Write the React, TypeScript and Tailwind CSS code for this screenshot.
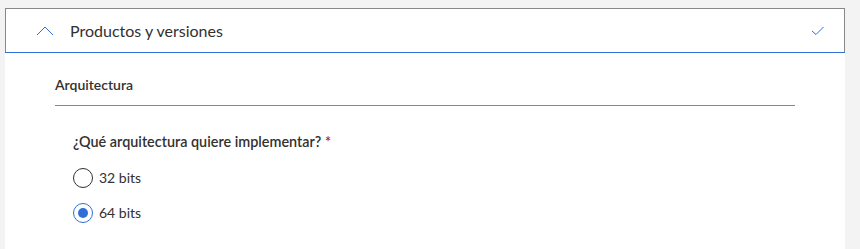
const font = { fontFamily: 'Lato, "Open Sans", sans-serif' };

function Radio({ label, checked }: { label: string; checked?: boolean }) {
  return (
    <label className="flex items-center h-[20px] gap-[6px] text-[14px] leading-[20px] text-[#323130]">
      <span
        className={`w-[20px] h-[20px] rounded-full flex items-center justify-center border ${
          checked ? "border-[#2f6fd8]" : "border-[#323130]"
        }`}
      >
        {checked && <span className="w-[10px] h-[10px] rounded-full bg-[#2f6fd8]" />}
      </span>
      <span>{label}</span>
    </label>
  );
}

export default function App() {
  return (
    <div className="w-[860px] h-[249px] bg-[#f3f3f3] pl-[5px] pt-[8px]" style={font}>
      <div className="w-[840px] h-full bg-white">
        <div className="h-[44px] border border-b-0 border-[#8a8886] flex items-center pl-[30px] pr-[19px]">
          <svg width="18" height="10" viewBox="0 0 18 10" className="shrink-0">
            <path d="M1 9 L9 1 L17 9" fill="none" stroke="#2f6fd8" strokeWidth="1" />
          </svg>
          <span className="ml-[16px] text-[16px] leading-[22px] text-[#323130] flex-1">Productos y versiones</span>
          <svg width="14" height="10" viewBox="0 0 14 10">
            <path d="M1 5 L5 8.5 L12.5 1" fill="none" stroke="#2f6fd8" strokeWidth="1" />
          </svg>
        </div>
        <div className="h-[1px] bg-[#2f6fd8]" />
        <div className="pl-[50px] pr-[50px] pt-[22px]">
          <div className="text-[14px] leading-[20px] font-semibold text-[#323130] pb-[10px] border-b border-[#8a8886]">
            Arquitectura
          </div>
          <div className="pl-[18px] pt-[26px]">
            <div className="text-[14.4px] leading-[20px] font-semibold text-[#323130]">
              ¿Qué arquitectura quiere implementar? <span className="text-[#a4262c]">*</span>
            </div>
            <div className="flex flex-col gap-[15px] mt-[16px]">
              <Radio label="32 bits" />
              <Radio label="64 bits" checked />
            </div>
          </div>
        </div>
      </div>
    </div>
  );
}
